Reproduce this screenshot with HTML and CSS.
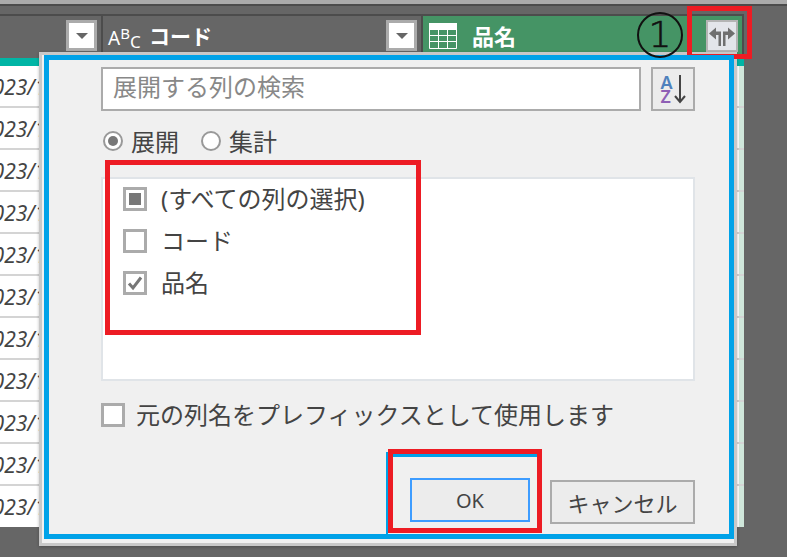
FILE: index.html
```html
<!DOCTYPE html>
<html lang="ja">
<head>
<meta charset="utf-8">
<title>展開</title>
<link rel="stylesheet" href="styles.css">
</head>
<body>
<div class="app">
  <div class="top-strip"></div>
  <div class="gap-bar"></div>
  <div class="grid-area">
    <div class="header">
      <div class="col col-first">
        <span class="filter"><i class="tri"></i></span>
      </div>
      <div class="col col-code">
        <span class="abc"><span class="abc-a">A</span><span class="abc-b">B</span><span class="abc-c">C</span></span>
        <span class="col-name">コード</span>
        <span class="filter"><i class="tri"></i></span>
      </div>
      <div class="col col-name-green">
        <svg class="table-icon" width="28" height="26" viewBox="0 0 28 26">
          <rect x="0" y="0" width="28" height="7" fill="#fff"/>
          <path d="M.5 7v18.5h27V7M0 12.5h28M0 18.500h28M9.500 7v18M18.500 7v18" fill="none" stroke="#fff"/>
        </svg>
        <span class="col-name wide">品名</span>
        <span class="expand">
          <svg width="28" height="28" viewBox="0 0 28 28">
            <path d="M1 11.500 8 5.500v4h5V24h-2.500V13H8v4.500ZM27 11.500 20 5.500v4h-5V24h2.500V13H20v4.500Z" fill="#6f6f6f"/>
          </svg>
        </span>
      </div>
    </div>
    <div class="quality"></div>
    <div class="rows">
      <div class="row"><span class="cell-date">2023/1</span><span class="cell-edge"></span></div>
      <div class="row"><span class="cell-date">2023/1</span><span class="cell-edge"></span></div>
      <div class="row"><span class="cell-date">2023/1</span><span class="cell-edge"></span></div>
      <div class="row"><span class="cell-date">2023/1</span><span class="cell-edge"></span></div>
      <div class="row"><span class="cell-date">2023/1</span><span class="cell-edge"></span></div>
      <div class="row"><span class="cell-date">2023/1</span><span class="cell-edge"></span></div>
      <div class="row"><span class="cell-date">2023/1</span><span class="cell-edge"></span></div>
      <div class="row"><span class="cell-date">2023/1</span><span class="cell-edge"></span></div>
      <div class="row"><span class="cell-date">2023/1</span><span class="cell-edge"></span></div>
      <div class="row"><span class="cell-date">2023/1</span><span class="cell-edge"></span></div>
      <div class="row"><span class="cell-date">2023/1</span><span class="cell-edge"></span></div>
    </div>
  </div>

  <div class="dialog">
    <div class="search-row">
      <div class="search">展開する列の検索</div>
      <div class="sort">
        <span class="sort-letters"><span class="sort-a">A</span><span class="sort-z">Z</span></span>
        <svg width="12" height="30" viewBox="0 0 12 30"><path d="M6 1v27M1 22l5 6 5-6" fill="none" stroke="#444" stroke-width="2"/></svg>
      </div>
    </div>
    <div class="radio-row">
      <span class="radio on"></span><span class="label">展開</span>
      <span class="radio second"></span><span class="label">集計</span>
    </div>
    <div class="list">
      <div class="item"><span class="cb"><i class="mixed"></i></span><span class="label">(すべての列の選択)</span></div>
      <div class="item"><span class="cb"></span><span class="label">コード</span></div>
      <div class="item"><span class="cb"><svg width="18" height="18" viewBox="0 0 18 18"><path d="M3 9.500 7 14 15 3.500" fill="none" stroke="#777" stroke-width="3"/></svg></span><span class="label">品名</span></div>
    </div>
    <div class="prefix"><span class="cb"></span><span class="label">元の列名をプレフィックスとして使用します</span></div>
    <div class="actions">
      <div class="btn ok">OK</div>
      <div class="btn cancel">キャンセル</div>
    </div>
  </div>

  <div class="mark red mark-expand"></div>
  <div class="mark blue mark-dialog"></div>
  <div class="mark blue mark-ok-blue"></div>
  <div class="mark red mark-list"></div>
  <div class="mark red mark-ok"></div>
  <div class="circled">1</div>
</div>
</body>
</html>
```
FILE: styles.css
```css
* { box-sizing: border-box; }
html, body { margin: 0; padding: 0; }
body { background: #666; }
.app {
  position: relative;
  width: 787px;
  height: 557px;
  overflow: hidden;
  background: #666;
  font-family: "Noto Sans", "Noto Sans CJK JP", sans-serif;
  color: #444;
}
.top-strip { height: 4px; background: #ababab; }
.gap-bar { height: 10px; background: #666; border-top: 2px solid #4c4c4c; }

.grid-area { width: 744px; }
.header {
  display: flex;
  height: 44px;
  background: #666;
  border-top: 2px solid #4c4c4c;
  border-right: 2px solid #4c4c4c;
}
.col { display: flex; align-items: flex-start; padding-top: 4px; height: 100%; }
.col-first { width: 101px; padding-left: 66px; }
.col-code { width: 320px; border-left: 2px solid #4c4c4c; padding-left: 5px; }
.col-name-green {
  flex: 1;
  border-left: 2px solid #4c4c4c;
  background: #459465;
  padding-left: 6px;
}
.filter {
  display: flex;
  align-items: center;
  justify-content: center;
  width: 31px;
  height: 31px;
  background: #fff;
  border: 3px solid #ababab;
}
.col-code .filter { margin-left: auto; margin-right: 4px; }
.tri {
  display: block;
  width: 0;
  height: 0;
  border-left: 6px solid transparent;
  border-right: 6px solid transparent;
  border-top: 6px solid #666;
}
.abc { display: flex; height: 21px; width: 31px; margin-top: 6px; color: #fff; line-height: 1; }
.abc-a { font-size: 19px; align-self: center; margin-top: 3px; }
.abc-b { font-size: 15px; align-self: flex-start; }
.abc-c { font-size: 17px; align-self: flex-end; margin-bottom: -3px; }
.col-name {
  margin-left: 10px;
  font-size: 21px;
  line-height: 32px;
  font-weight: 700;
  color: #fff;
}
.col-name.wide { margin-left: 15px; font-size: 22px; }
.table-icon { margin-top: 3px; }
.expand {
  display: flex;
  align-items: center;
  justify-content: center;
  width: 32px;
  height: 32px;
  margin-left: auto;
  margin-right: 4px;
  background: #e3e5ea;
  border: 2px solid #b4b4b4;
}

.quality { height: 8px; margin-top: 0; background: #00b5a5; }
.rows { display: flex; flex-direction: column; }
.row {
  display: flex;
  height: 42px;
  background: #fff;
  border-bottom: 2px solid #d4d4d4;
  overflow: hidden;
}
.row:last-child { border-bottom: 0; height: 41px; }
.cell-date {
  flex: 1;
  margin-left: -19px;
  font-size: 21px;
  font-style: italic;
  line-height: 42px;
  white-space: nowrap;
}
.cell-edge { width: 5px; background: #cfe6da; }

.dialog {
  position: absolute;
  left: 39px;
  top: 52px;
  width: 698px;
  height: 494px;
  padding: 12px 39px 0 59px;
  background: #f0f0f0;
  border: 3px solid #c8c8c8;
  box-shadow: 0 1px 3px rgba(0, 0, 0, .25);
}
.search-row { display: flex; gap: 10px; height: 44px; }
.search {
  flex: 1;
  padding-left: 10px;
  background: #fff;
  border: 2px solid #ababab;
  font-size: 24px;
  line-height: 35px;
  color: #888;
}
.sort {
  display: flex;
  align-items: center;
  justify-content: center;
  gap: 1px;
  width: 44px;
  background: #ececec;
  border: 2px solid #ababab;
}
.sort-letters { display: flex; flex-direction: column; font-size: 18px; line-height: 14px; font-weight: 600; }
.sort-a { color: #4f81bd; }
.sort-z { color: #8e5fb5; }

.radio-row { display: flex; align-items: center; height: 30px; margin-top: 15px; padding-left: 2px; }
.radio-row .label { margin-top: 2px; }
.radio {
  display: flex;
  align-items: center;
  justify-content: center;
  width: 20px;
  height: 20px;
  margin-right: 8px;
  background: #fff;
  border: 2px solid #999;
  border-radius: 50%;
}
.radio.on::before {
  content: "";
  width: 10px;
  height: 10px;
  border-radius: 50%;
  background: #777;
}
.radio.second { margin-left: 22px; }
.label { font-size: 24px; line-height: 32px; white-space: nowrap; }

.list {
  display: flex;
  flex-direction: column;
  gap: 18px;
  height: 204px;
  margin-top: 21px;
  padding: 8px 0 0 20px;
  background: #fff;
  border: 2px solid #e0e4e8;
}
.item { display: flex; align-items: center; gap: 14px; height: 24px; }
.cb {
  display: flex;
  align-items: center;
  justify-content: center;
  flex: none;
  width: 24px;
  height: 24px;
  background: #fff;
  border: 3px solid #ababab;
}
.mixed { display: block; width: 12px; height: 12px; background: #777; }

.prefix { display: flex; align-items: center; gap: 11px; height: 24px; margin-top: 22px; }

.actions { display: flex; justify-content: flex-end; align-items: flex-start; gap: 20px; margin-top: 51px; }
.btn {
  display: flex;
  align-items: center;
  justify-content: center;
  height: 44px;
  background: #ececec;
  font-size: 22px;
}
.ok { width: 120px; border: 2px solid #3d9cff; font-size: 20px; }
.cancel { width: 145px; margin-top: 2px; border: 2px solid #ababab; }

.mark { position: absolute; border-style: solid; border-width: 5px; pointer-events: none; }
.red { border-color: #ed1c24; }
.blue { border-color: #00a2e8; }
.mark-expand { left: 687px; top: 6px; width: 65px; height: 53px; }
.mark-dialog { left: 44px; top: 55px; width: 690px; height: 484px; }
.mark-ok-blue { left: 386px; top: 452px; width: 152px; height: 82px; border-width: 5px 0 0 2px; }
.mark-list { left: 105px; top: 160px; width: 316px; height: 175px; }
.mark-ok { left: 388px; top: 449px; width: 154px; height: 84px; }
.circled {
  position: absolute;
  left: 637px;
  top: 12px;
  width: 46px;
  height: 46px;
  border: 2px solid #111;
  border-radius: 50%;
  text-align: center;
  font-family: "DejaVu Sans", sans-serif;
  font-weight: 200;
  font-size: 36px;
  line-height: 42px;
  color: #111;
  -webkit-text-stroke: .6px #111;
}
```
